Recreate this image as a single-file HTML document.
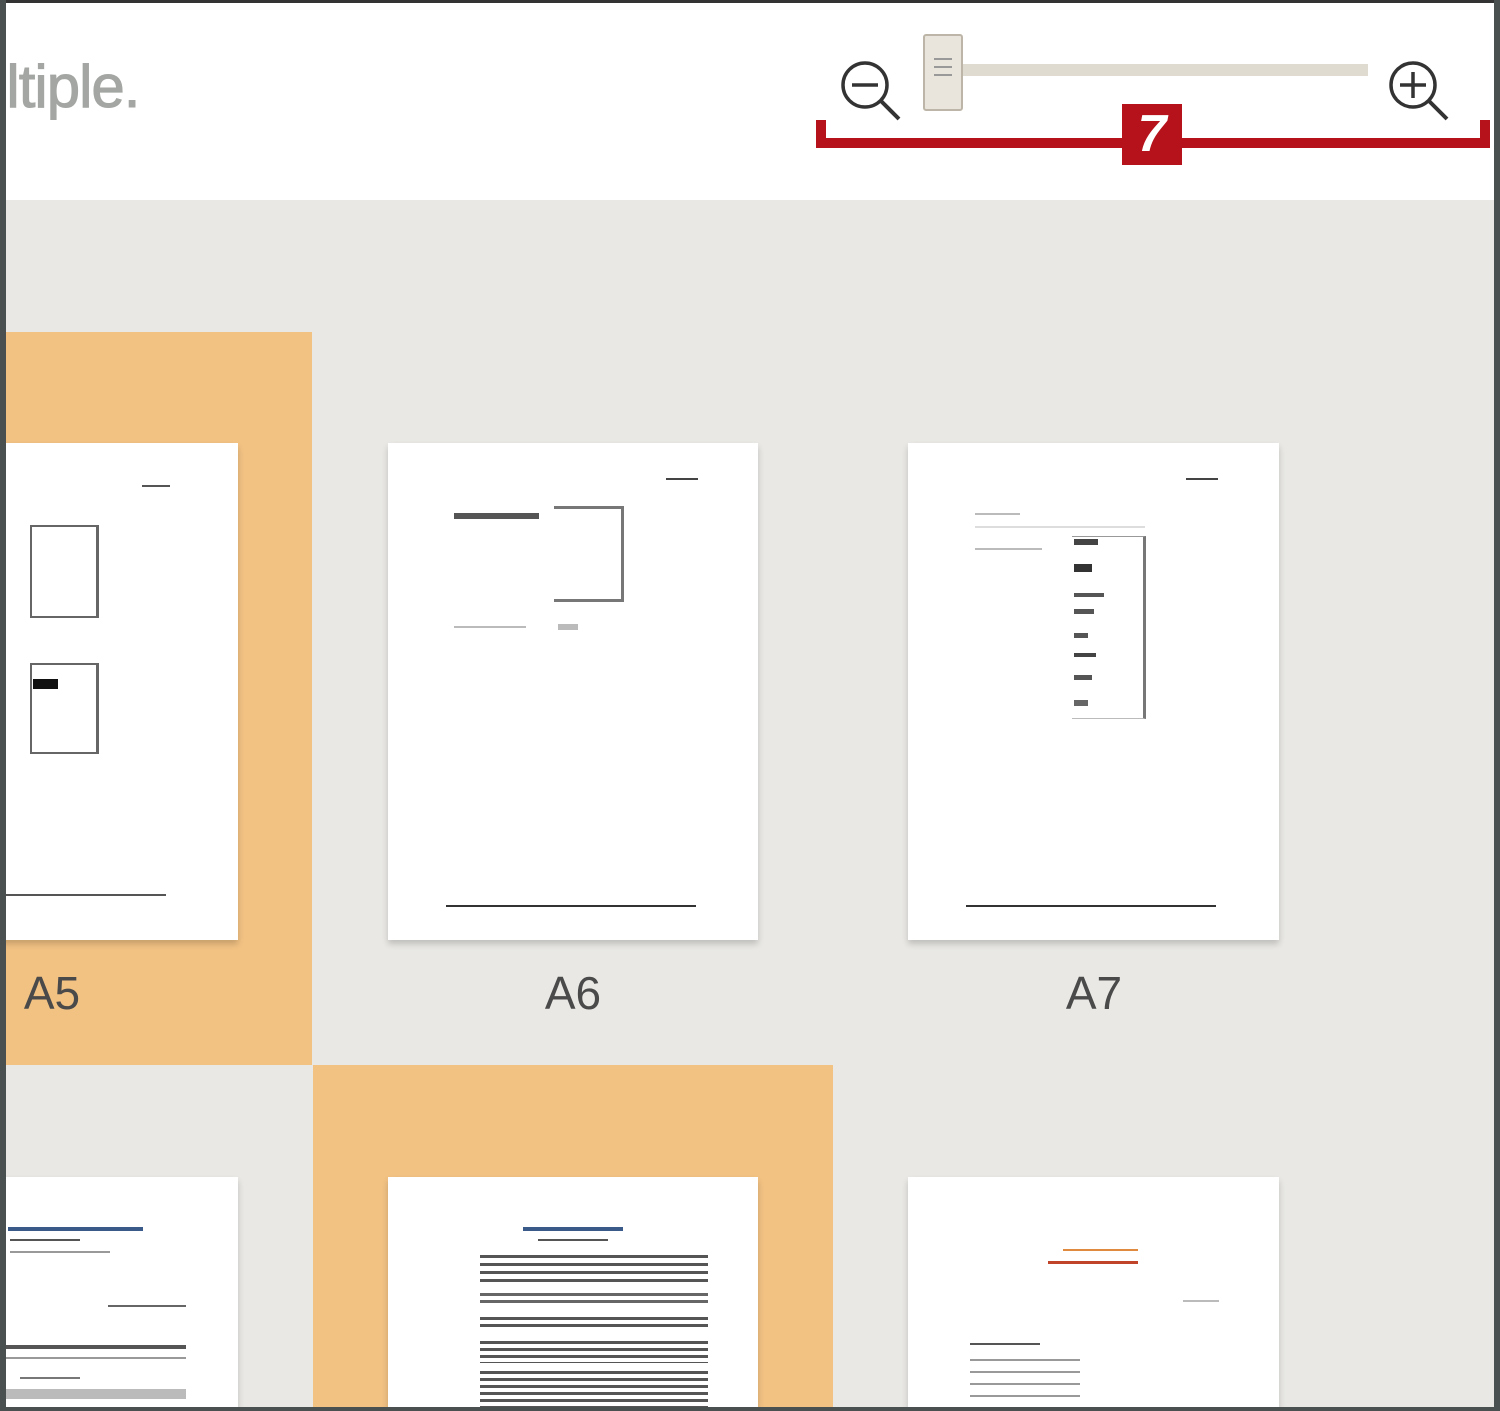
<!DOCTYPE html>
<html style="width:1500px;height:1411px;overflow:hidden"><head><meta charset="utf-8"><style>
*{margin:0;padding:0;box-sizing:border-box}
body{width:1500px;height:1411px;overflow:hidden;background:#e9e8e4;position:relative;font-family:"Liberation Sans",sans-serif}
.a{position:absolute}
.pg{position:absolute;background:#fff;box-shadow:0 4px 6px rgba(0,0,0,0.18);overflow:hidden}
.lbl{position:absolute;font-size:46px;color:#4a4a4a;width:200px;text-align:center;top:966px}
.ln{position:absolute;background:#222;height:2px}
.lt{position:absolute;background:#bbb;height:2px}
</style></head><body>
<div class="a" style="left:0;top:0;width:1500px;height:200px;background:#fff"></div>
<div class="a" style="left:-26px;top:52px;font-size:60px;color:#a3a6a2;letter-spacing:-1px;-webkit-text-stroke:1px #a3a6a2">ultiple.</div>

<div class="a" style="left:0;top:332px;width:312px;height:733px;background:#f2c283"></div>
<div class="a" style="left:313px;top:1065px;width:520px;height:346px;background:#f2c283"></div>

<div class="pg" style="left:0;top:443px;width:238px;height:497px">
 <div class="ln" style="left:142px;top:42px;width:28px;background:#555"></div>
 <div class="a" style="left:30px;top:82px;width:69px;height:93px;border:2px solid #666;border-right-width:3px"></div>
 <div class="a" style="left:30px;top:220px;width:69px;height:91px;border:2px solid #666;border-right-width:3px"></div>
 <div class="a" style="left:33px;top:236px;width:25px;height:10px;background:#111"></div>
 <div class="ln" style="left:6px;top:451px;width:160px;background:#555"></div>
</div>
<div class="pg" style="left:388px;top:443px;width:370px;height:497px">
 <div class="ln" style="left:278px;top:35px;width:32px;background:#444"></div>
 <div class="ln" style="left:66px;top:70px;width:85px;height:6px;background:#555"></div>
 <div class="a" style="left:166px;top:63px;width:70px;height:96px;border:3px solid #777;border-left:none"></div>
 <div class="lt" style="left:66px;top:183px;width:72px"></div>
 <div class="lt" style="left:170px;top:181px;width:20px;height:6px"></div>
 <div class="ln" style="left:58px;top:462px;width:250px;background:#333"></div>
</div>
<div class="pg" style="left:908px;top:443px;width:371px;height:497px">
 <div class="ln" style="left:278px;top:35px;width:32px;background:#444"></div>
 <div class="lt" style="left:67px;top:70px;width:45px"></div>
 <div class="lt" style="left:67px;top:83px;width:170px;background:#ddd"></div>
 <div class="lt" style="left:67px;top:105px;width:67px"></div>
 <div class="a" style="left:164px;top:93px;width:74px;height:183px;border:3px solid #777;border-left:none;border-top:1px solid #999;border-bottom:1px solid #bbb"></div>
 <div class="ln" style="left:166px;top:96px;width:24px;height:6px;background:#444"></div>
 <div class="ln" style="left:166px;top:121px;width:18px;height:8px;background:#333"></div>
 <div class="ln" style="left:166px;top:150px;width:30px;height:4px;background:#555"></div>
 <div class="ln" style="left:166px;top:166px;width:20px;height:5px;background:#555"></div>
 <div class="ln" style="left:166px;top:190px;width:14px;height:5px;background:#555"></div>
 <div class="ln" style="left:166px;top:210px;width:22px;height:4px;background:#444"></div>
 <div class="ln" style="left:166px;top:232px;width:18px;height:5px;background:#555"></div>
 <div class="ln" style="left:166px;top:257px;width:14px;height:6px;background:#666"></div>
 <div class="ln" style="left:58px;top:462px;width:250px;background:#333"></div>
</div>
<div class="lbl" style="left:-48px">A5</div>
<div class="lbl" style="left:473px">A6</div>
<div class="lbl" style="left:994px">A7</div>

<div class="pg" style="left:0;top:1177px;width:238px;height:234px">
 <div class="ln" style="left:8px;top:50px;width:135px;height:4px;background:#3a5a8a"></div>
 <div class="ln" style="left:10px;top:62px;width:70px;background:#555"></div>
 <div class="ln" style="left:10px;top:74px;width:100px;background:#999"></div>
 <div class="ln" style="left:108px;top:128px;width:78px;background:#666"></div>
 <div class="ln" style="left:4px;top:168px;width:182px;height:4px;background:#555"></div>
 <div class="ln" style="left:4px;top:180px;width:182px;background:#999"></div>
 <div class="ln" style="left:20px;top:200px;width:60px;background:#777"></div>
 <div class="ln" style="left:4px;top:212px;width:182px;height:10px;background:#bbb"></div>
</div>
<div class="pg" style="left:388px;top:1177px;width:370px;height:234px">
 <div class="ln" style="left:135px;top:50px;width:100px;height:4px;background:#3a5a8a"></div>
 <div class="ln" style="left:150px;top:62px;width:70px;background:#555"></div>
 <div class="a" style="left:92px;top:78px;width:228px;height:28px;background:repeating-linear-gradient(#555 0 3px,transparent 3px 8px)"></div>
 <div class="a" style="left:92px;top:116px;width:228px;height:14px;background:repeating-linear-gradient(#666 0 3px,transparent 3px 7px)"></div>
 <div class="a" style="left:92px;top:140px;width:228px;height:14px;background:repeating-linear-gradient(#555 0 3px,transparent 3px 7px)"></div>
 <div class="a" style="left:92px;top:164px;width:228px;height:22px;background:repeating-linear-gradient(#555 0 3px,transparent 3px 7px)"></div>
 <div class="a" style="left:92px;top:194px;width:228px;height:40px;background:repeating-linear-gradient(#555 0 3px,transparent 3px 7px)"></div>
</div>
<div class="pg" style="left:908px;top:1177px;width:371px;height:234px">
 <div class="ln" style="left:155px;top:72px;width:75px;background:#e08a40"></div>
 <div class="ln" style="left:140px;top:84px;width:90px;height:3px;background:#c0442a"></div>
 <div class="lt" style="left:275px;top:123px;width:36px"></div>
 <div class="ln" style="left:62px;top:166px;width:70px;background:#555"></div>
 <div class="a" style="left:62px;top:182px;width:110px;height:50px;background:repeating-linear-gradient(#999 0 2px,transparent 2px 12px)"></div>
</div>

<div class="a" style="left:958px;top:64px;width:410px;height:12px;background:#e0dbd0"></div>
<div class="a" style="left:923px;top:34px;width:40px;height:77px;background:#e9e5dc;border:2px solid #bdb6a8;border-radius:3px"></div>
<div class="a" style="left:934px;top:58px;width:18px;height:2px;background:#999"></div>
<div class="a" style="left:934px;top:66px;width:18px;height:2px;background:#999"></div>
<div class="a" style="left:934px;top:74px;width:18px;height:2px;background:#999"></div>
<svg class="a" style="left:830px;top:50px" width="80" height="80" viewBox="0 0 80 80">
 <circle cx="35" cy="35" r="22" fill="none" stroke="#333" stroke-width="3.5"/>
 <line x1="22" y1="35" x2="48" y2="35" stroke="#333" stroke-width="3.5"/>
 <line x1="51" y1="51" x2="69" y2="69" stroke="#333" stroke-width="4"/>
</svg>
<svg class="a" style="left:1378px;top:50px" width="80" height="80" viewBox="0 0 80 80">
 <circle cx="35" cy="35" r="22" fill="none" stroke="#333" stroke-width="3.5"/>
 <line x1="22" y1="35" x2="48" y2="35" stroke="#333" stroke-width="3.5"/>
 <line x1="35" y1="22" x2="35" y2="48" stroke="#333" stroke-width="3.5"/>
 <line x1="51" y1="51" x2="69" y2="69" stroke="#333" stroke-width="4"/>
</svg>
<div class="a" style="left:816px;top:138px;width:674px;height:10px;background:#b5121b"></div>
<div class="a" style="left:816px;top:120px;width:10px;height:28px;background:#b5121b"></div>
<div class="a" style="left:1480px;top:120px;width:10px;height:28px;background:#b5121b"></div>
<div class="a" style="left:1122px;top:104px;width:60px;height:61px;background:#b5121b;color:#fff;font-weight:bold;font-size:52px;text-align:center;line-height:61px;font-style:italic">7</div>

<div class="a" style="left:0;top:0;width:1500px;height:3px;background:#333"></div>
<div class="a" style="left:0;top:0;width:6px;height:1411px;background:#4a5050"></div>
<div class="a" style="left:1494px;top:0;width:6px;height:1411px;background:#4a5050"></div>
<div class="a" style="left:0;top:1407px;width:1500px;height:4px;background:#4a5050"></div>
</body></html>
